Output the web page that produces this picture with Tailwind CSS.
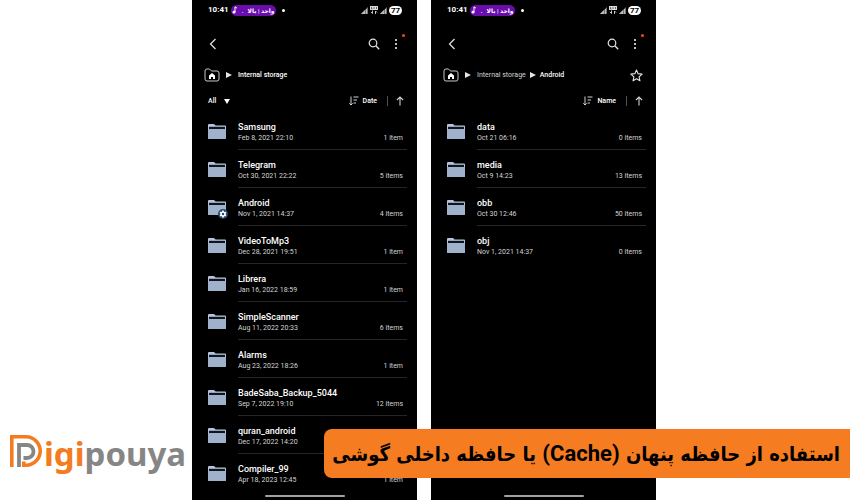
<!DOCTYPE html>
<html lang="fa">
<head>
  <meta charset="UTF-8" />
  <meta name="viewport" content="width=device-width, initial-scale=1.0"/>
  <title>Digipouya</title>
  <script src="https://cdn.jsdelivr.net/npm/@tailwindcss/browser@4"></script>
</head>
<body class="bg-white font-['Roboto','DejaVu_Sans',sans-serif]">

  <!-- ICONS -->
  <svg class="hidden">
    <symbol id="back" viewBox="0 0 12 12"><path d="M8.5 1 3.5 6l5 5" fill="none" stroke="#e5e5e5" stroke-width="1.2"/></symbol>
    <symbol id="search" viewBox="0 0 12 12"><circle cx="5" cy="5" r="3.8" fill="none" stroke="#e5e5e5" stroke-width="1.2"/><path d="m7.8 7.8 3.4 3.4" stroke="#e5e5e5" stroke-width="1.3"/></symbol>
    <symbol id="more" viewBox="0 0 4 12"><circle cx="2" cy="2" r="1" fill="#fff"/><circle cx="2" cy="6" r="1" fill="#fff"/><circle cx="2" cy="10" r="1" fill="#fff"/></symbol>
    <symbol id="home" viewBox="0 0 16 14"><path d="M1 11V3Q1 1 3 1h2.5L7.5 3H13q2 0 2 2v6q0 2-2 2H3q-2 0-2-2Z" fill="none" stroke="#c8c8c8" stroke-width="1"/><path d="M8 5 5 7.5V11h2V9h2v2h2V7.500Z" fill="#fff"/></symbol>
    <symbol id="play" viewBox="0 0 6 6"><path d="M0 0 6 3 0 6Z" fill="#e5e5e5"/></symbol>
    <symbol id="down" viewBox="0 0 6 5"><path d="M0 0h6L3 5Z" fill="#fff"/></symbol>
    <symbol id="sort" viewBox="0 0 10 10"><path d="M2 .5v8.500M.3 7.300 2 9l1.700-1.700M4.500 1h5M4.500 4H8M4.500 7H7" fill="none" stroke="#d4d4d4"/></symbol>
    <symbol id="up" viewBox="0 0 8 10"><path d="M4 9.500V1M1 4l3-3 3 3" fill="none" stroke="#d4d4d4" stroke-width="1.100"/></symbol>
    <symbol id="star" viewBox="0 0 12 12"><path d="m6 .9 1.500 3.400 3.700.4-2.800 2.500.8 3.700L6 9l-3.200 1.900.8-3.700L.8 4.700l3.700-.4Z" fill="none" stroke="#e5e5e5" stroke-linejoin="round"/></symbol>
    <symbol id="note" viewBox="0 0 6 8"><path d="M3 6V.8l2 1.400" fill="none" stroke="#fff"/><circle cx="2" cy="6.200" r="1.400" fill="#fff"/></symbol>
    <symbol id="signal" viewBox="0 0 7 7"><path d="M0 7 7 0v7Z" fill="#777"/><path d="M0 7 4 3v4ZM5 2h1v5H5Z" fill="#bbb"/></symbol>
    <symbol id="lte" viewBox="0 0 8 8"><path d="M0 0h8v4H0Z" fill="#ddd"/><path d="M1.500 1v2h1M4 1v2M6.500 1v2" fill="none" stroke="#333" stroke-width=".7"/><path d="M2.500 4.500v3M1 6l1.500 1.500M5.500 8V5L7 6.500" fill="none" stroke="#ddd" stroke-width=".9"/></symbol>
    <symbol id="folder" viewBox="0 0 18 15"><path d="M0 1q0-1 1-1h4.500q.7 0 1.200.6L7.500 1.500H17q1 0 1 1V14q0 1-1 1H1q-1 0-1-1Z" fill="#b6c5dd"/><path d="M1 2.800h16V5H1Z" fill="#10151f"/><path d="M0 5h18v9q0 1-1 1H1q-1 0-1-1Z" fill="#9fb1cb"/></symbol>
    <symbol id="gear" viewBox="0 0 10 10"><circle cx="5" cy="5" r="5" fill="#26466b"/><path d="M5 1.500v7M2 3.200l6 3.600M8 3.200 2 6.800" stroke="#fff" stroke-width="1.700"/><circle cx="5" cy="5" r="2.600" fill="#fff"/><circle cx="5" cy="5" r="1.200" fill="#26466b"/></symbol>
  </svg>

  <main class="flex gap-3.5 h-screen pl-48 pr-[194px] overflow-hidden">

    <!-- INTERNAL STORAGE -->
    <section class="relative flex-1 min-w-0 bg-black text-white overflow-hidden">
      <div class="status"></div>
      <nav class="flex items-center h-[22px] pl-3 pr-[13px] gap-1.5 text-[7px] font-medium">
        <button aria-label="Home"><svg class="w-4 h-3.5"><use href="#home"/></svg></button>
        <svg class="size-1.5"><use href="#play"/></svg>
        <a href="#">Internal storage</a>
      </nav>
      <div class="flex items-center h-[22px] mt-1 pl-4 pr-[13px] text-[7px] font-medium">
        <button class="flex items-center gap-2">All <svg class="w-1.5 h-[5px]"><use href="#down"/></svg></button>
        <button class="flex items-center gap-1 ml-auto"><svg class="size-2.5"><use href="#sort"/></svg>Date</button>
        <span class="w-px h-2.5 ml-2.5 mr-2 bg-neutral-600"></span>
        <button aria-label="Ascending"><svg class="w-2 h-2.5"><use href="#up"/></svg></button>
      </div>
      <ul id="storage"></ul>
      <div class="absolute bottom-[3px] inset-x-0 mx-auto w-20 h-0.5 rounded bg-neutral-400"></div>
    </section>

    <!-- ANDROID FOLDER -->
    <section class="relative flex-1 min-w-0 bg-black text-white overflow-hidden">
      <div class="status"></div>
      <nav class="flex items-center h-[22px] pl-3 pr-[13px] gap-1.5 text-[7px] font-medium">
        <button aria-label="Home"><svg class="w-4 h-3.5"><use href="#home"/></svg></button>
        <svg class="size-1.5"><use href="#play"/></svg>
        <span class="flex items-center gap-1">
          <a href="#" class="font-normal text-neutral-300">Internal storage</a>
          <svg class="size-1.5"><use href="#play"/></svg>
          <a href="#">Android</a>
        </span>
        <button class="ml-auto" aria-label="Favorite"><svg class="size-[13px]"><use href="#star"/></svg></button>
      </nav>
      <div class="flex items-center h-[22px] mt-1 pl-4 pr-[13px] text-[7px] font-medium">
        <button class="flex items-center gap-1 ml-auto"><svg class="size-2.5"><use href="#sort"/></svg>Name</button>
        <span class="w-px h-2.5 ml-2.5 mr-2 bg-neutral-600"></span>
        <button aria-label="Ascending"><svg class="w-2 h-2.5"><use href="#up"/></svg></button>
      </div>
      <ul id="android"></ul>
      <div class="absolute bottom-[3px] inset-x-0 mx-auto w-20 h-0.5 rounded bg-neutral-400"></div>
    </section>
  </main>

  <!-- LOGO -->
  <div class="absolute left-2.5 bottom-6 flex items-end gap-0.5 h-11">
    <svg class="w-8 h-8 mb-[9px]" viewBox="0 0 32 32">
      <path d="M1.800 32V1.800H16a14.200 14.200 0 0 1 0 28.400h-2.200V26.500" fill="none" stroke="#f47b20" stroke-width="3.600"/>
      <path d="M9 32V10h8a6.500 6.500 0 0 1 0 13h-3.500" fill="none" stroke="#868686" stroke-width="3.800"/>
    </svg>
    <span class="text-[33px] leading-[44px] font-bold font-['Noto_Sans',sans-serif] text-[#868686]"><span class="text-[#f47b20]">igi</span>pouya</span>
  </div>

  <!-- TITLE -->
  <h1 dir="rtl" class="absolute right-0 bottom-[22px] h-[49px] pr-2.5 pl-2 rounded-l-lg bg-[#f57c20] text-black text-[20px] leading-[49px] font-bold font-['DejaVu_Sans_Condensed','DejaVu_Sans',sans-serif] whitespace-nowrap">استفاده از حافظه پنهان <span class="text-[22px] font-['Roboto',sans-serif]">(Cache)</span> یا حافظه داخلی گوشی</h1>

  <script>
    const storage = [
      ["Samsung", "Feb 8, 2021 22:10", "1 item"],
      ["Telegram", "Oct 30, 2021 22:22", "5 items"],
      ["Android", "Nov 1, 2021 14:37", "4 items"],
      ["VideoToMp3", "Dec 28, 2021 19:51", "1 item"],
      ["Librera", "Jan 16, 2022 18:59", "1 item"],
      ["SimpleScanner", "Aug 11, 2022 20:33", "6 items"],
      ["Alarms", "Aug 23, 2022 18:26", "1 item"],
      ["BadeSaba_Backup_5044", "Sep 7, 2022 19:10", "12 items"],
      ["quran_android", "Dec 17, 2022 14:20", ""],
      ["Compiler_99", "Apr 18, 2023 12:45", "1 item"]
    ];

    const android = [
      ["data", "Oct 21 06:16", "0 items"],
      ["media", "Oct 9 14:23", "13 items"],
      ["obb", "Oct 30 12:46", "50 items"],
      ["obj", "Nov 1, 2021 14:37", "0 items"]
    ];

    function renderList(id, rows) {
      document.getElementById(id).innerHTML = rows.map(([name, date, count], i) => `
        <li class="flex items-center h-[38px] pl-4 pr-2.5">
          <div class="relative mr-3">
            <svg class="w-[18px] h-[15px]"><use href="#folder"/></svg>
            ${name === "Android" ? '<svg class="absolute -right-0.5 -bottom-1 size-2.5"><use href="#gear"/></svg>' : ""}
          </div>
          <div class="flex-1 flex items-end h-full pb-1.5 pr-1 border-b ${i === rows.length - 1 ? "border-transparent" : "border-neutral-800"}">
            <div>
              <p class="text-[9px] leading-[13px] font-medium">${name}</p>
              <p class="text-[7px] leading-[9px] text-neutral-300">${date}</p>
            </div>
            <span class="ml-auto text-[7px] leading-[9px] text-neutral-300">${count}</span>
          </div>
        </li>`).join("");
    }

    document.querySelectorAll(".status").forEach(el => {
      el.innerHTML = `
        <div class="flex items-center h-5 pl-4 pr-[15px] text-[8px] font-bold">
          <span>10:41</span>
          <span class="flex items-center justify-center gap-1 ml-0.5 w-[45px] h-[11px] rounded-full bg-[#6a0dad] text-[6px]"><svg class="w-1.5 h-2"><use href="#note"/></svg><span>.</span><span dir="rtl">واحد | بالا</span></span>
          <span class="ml-1.5 size-[3px] rounded-full bg-white"></span>
          <span class="flex items-center gap-0.5 ml-auto">
            <svg class="size-[7px]"><use href="#signal"/></svg>
            <svg class="size-2"><use href="#lte"/></svg>
            <svg class="size-[7px]"><use href="#signal"/></svg>
            <span class="w-[13px] h-[9px] leading-[9px] rounded-full bg-white text-black text-center">77</span>
          </span>
        </div>
        <div class="flex items-center h-10 mt-1 pl-[15px] pr-[19px]">
          <button aria-label="Back"><svg class="size-3"><use href="#back"/></svg></button>
          <button class="ml-auto" aria-label="Search"><svg class="size-3"><use href="#search"/></svg></button>
          <button class="relative ml-3.5" aria-label="More options"><svg class="w-1 h-3"><use href="#more"/></svg><span class="absolute -top-1 -right-[7px] size-[3px] rounded-full bg-orange-600"></span></button>
        </div>`;
    });

    renderList("storage", storage);
    renderList("android", android);
  </script>
</body>
</html>
